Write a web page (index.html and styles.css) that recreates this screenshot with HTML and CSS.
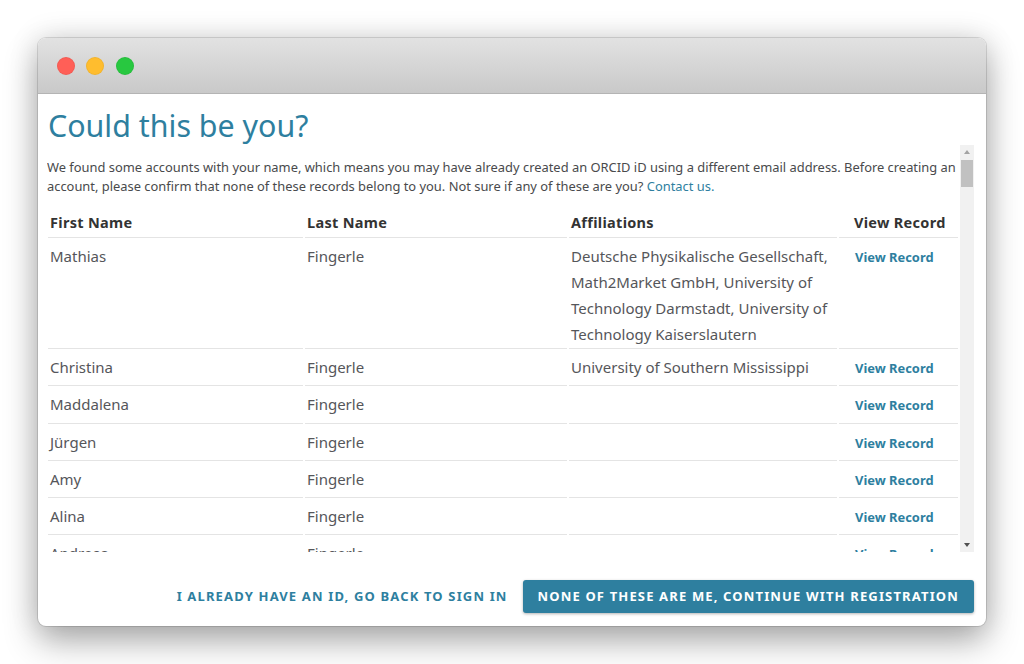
FILE: index.html
```html
<!DOCTYPE html>
<html lang="en">
<head>
<meta charset="utf-8">
<title>Could this be you?</title>
<link rel="stylesheet" href="styles.css">
</head>
<body>
<div class="window">
  <div class="titlebar">
    <span class="dot dot-red"></span>
    <span class="dot dot-yellow"></span>
    <span class="dot dot-green"></span>
  </div>
  <div class="content">
    <h1 class="title">Could this be you?</h1>
    <div class="scroll-area">
      <div class="scroll-body">
        <p class="intro">We found some accounts with your name, which means you may have already created an ORCID iD using a different email address. Before creating an account, please confirm that none of these records belong to you. Not sure if any of these are you? <a class="link" href="#">Contact us.</a></p>
        <table class="results">
          <colgroup>
            <col class="col-first"><col class="col-last"><col class="col-aff"><col class="col-view">
          </colgroup>
          <thead>
            <tr><th>First Name</th><th>Last Name</th><th>Affiliations</th><th class="th-view">View Record</th></tr>
          </thead>
          <tbody>
            <tr><td>Mathias</td><td>Fingerle</td><td>Deutsche Physikalische Gesellschaft, Math2Market GmbH, University of Technology Darmstadt, University of Technology Kaiserslautern</td><td class="td-view"><a class="record" href="#">View Record</a></td></tr>
            <tr><td>Christina</td><td>Fingerle</td><td>University of Southern Mississippi</td><td class="td-view"><a class="record" href="#">View Record</a></td></tr>
            <tr><td>Maddalena</td><td>Fingerle</td><td></td><td class="td-view"><a class="record" href="#">View Record</a></td></tr>
            <tr><td>Jürgen</td><td>Fingerle</td><td></td><td class="td-view"><a class="record" href="#">View Record</a></td></tr>
            <tr><td>Amy</td><td>Fingerle</td><td></td><td class="td-view"><a class="record" href="#">View Record</a></td></tr>
            <tr><td>Alina</td><td>Fingerle</td><td></td><td class="td-view"><a class="record" href="#">View Record</a></td></tr>
            <tr><td>Andreas</td><td>Fingerle</td><td></td><td class="td-view"><a class="record" href="#">View Record</a></td></tr>
          </tbody>
        </table>
      </div>
      <div class="scrollbar">
        <svg class="arrow" width="14" height="15" viewBox="0 0 14 15"><path d="M7 5 L10 9 L4 9 Z" fill="#a3a3a3"/></svg>
        <div class="thumb"></div>
        <div class="track"></div>
        <svg class="arrow" width="14" height="15" viewBox="0 0 14 15"><path d="M4 6 L10 6 L7 10 Z" fill="#505050"/></svg>
      </div>
    </div>
    <div class="actions">
      <a class="btn-text" href="#">I already have an iD, go back to sign in</a>
      <a class="btn-primary" href="#">None of these are me, continue with registration</a>
    </div>
  </div>
</div>
</body>
</html>
```
FILE: styles.css
```css
* { box-sizing: border-box; }
html, body { margin: 0; height: 100%; background: #fff; }
body {
  padding: 38px;
  overflow: hidden;
  font-family: "Noto Sans", sans-serif;
  color: #494a4c;
}
.window {
  width: 948px;
  height: 588px;
  background: #fff;
  border-radius: 8px;
  overflow: hidden;
  display: flex;
  flex-direction: column;
  box-shadow: 0 0 0 1px rgba(0,0,0,.12), 0 16px 34px rgba(0,0,0,.3), 0 0 30px rgba(0,0,0,.14);
}
.titlebar {
  height: 56px;
  flex: none;
  display: flex;
  align-items: center;
  gap: 11.5px;
  padding: 0 0 0 18.5px;
  background: linear-gradient(#e2e2e2, #c9c9c9);
  border-bottom: 1px solid #b4b4b4;
}
.dot { width: 18px; height: 18px; border-radius: 50%; border: 1px solid rgba(0,0,0,.05); }
.dot-red { background: #ff5f57; }
.dot-yellow { background: #ffbd2e; }
.dot-green { background: #28c840; }
.content {
  flex: 1;
  min-height: 0;
  display: flex;
  flex-direction: column;
  padding: 0 12px 0 10px;
}
.title {
  margin: 12px 0 0;
  height: 39px;
  line-height: 39px;
  font-size: 30.4px;
  font-weight: 400;
  color: #2e7f9f;
}
.scroll-area {
  height: 407px;
  display: flex;
  flex: none;
}
.scroll-body { width: 912px; overflow: hidden; flex: none; margin-left: -1px; margin-right: 1px; }
.intro {
  margin: 13px 0 0;
  font-size: 12.9px;
  line-height: 18.6px;
  color: #494a4c;
}
.link { color: #2e7f9f; text-decoration: none; }
.results {
  margin-top: 11px;
  margin-left: -1px;
  width: 914px;
  table-layout: fixed;
  border-collapse: separate;
  border-spacing: 2px 0;
}
.col-first { width: 255px; }
.col-last { width: 262px; }
.col-aff { width: 268px; }
.col-view { width: 119px; }
.results th {
  text-align: left;
  font-size: 14.5px;
  font-weight: 700;
  color: #333;
  height: 32px;
  padding: 1px 2px 0;
  letter-spacing: .3px;
  border-bottom: 1px solid #e4e4e4;
}
.results th.th-view { padding-left: 15px; }
.results td {
  vertical-align: top;
  height: 37.25px;
  padding: 5px 2px 1px;
  font-size: 15px;
  line-height: 26px;
  color: #55565a;
  border-bottom: 1px solid #e4e4e4;
}
.results td.td-view { padding-left: 16px; }
.record {
  font-size: 12.9px;
  font-weight: 700;
  color: #2e7f9f;
  text-decoration: none;
}
.scrollbar {
  width: 14px;
  flex: none;
  display: flex;
  flex-direction: column;
  background: #f1f1f1;
}
.arrow { display: block; flex: none; }
.thumb { height: 27px; background: #c1c1c1; margin: 0 1px; flex: none; }
.track { flex: 1; }
.actions {
  display: flex;
  justify-content: flex-end;
  align-items: center;
  gap: 15px;
  margin-top: 28px;
}
.btn-text, .btn-primary {
  font-size: 13px;
  font-weight: 700;
  text-transform: uppercase;
  letter-spacing: 1.15px;
  text-decoration: none;
}
.btn-text { color: #2e7f9f; padding-bottom: 2px; }
.btn-primary {
  display: block;
  height: 33px;
  line-height: 33px;
  padding: 0 15px;
  background: #2e7f9f;
  color: #fff;
  border-radius: 3px;
  box-shadow: 0 1px 3px rgba(0,0,0,.3);
}
```
